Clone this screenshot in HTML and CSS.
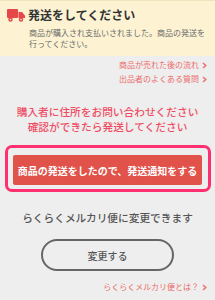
FILE: index.html
```html
<!DOCTYPE html>
<html lang="ja">
<head>
<meta charset="utf-8">
<link rel="stylesheet" href="styles.css">
</head>
<body>
<header class="notice">
  <div class="notice-title">
    <svg class="truck" width="18" height="14" viewBox="0 0 18 14">
      <rect x="0" y="1" width="11" height="9" rx="1" fill="#e8474a"/>
      <path d="M11.5 4 H15 L18 7.5 V10 H11.5 Z" fill="#e8474a"/>
      <circle cx="3.5" cy="11.5" r="2.2" fill="#e8474a"/>
      <circle cx="14" cy="11.5" r="2.2" fill="#e8474a"/>
      <circle cx="3.5" cy="11.5" r="0.8" fill="#fdf3d3"/>
      <circle cx="14" cy="11.5" r="0.8" fill="#fdf3d3"/>
    </svg>
    <h1>発送をしてください</h1>
  </div>
  <p class="notice-desc">商品が購入され支払いされました。商品の発送を行ってください。</p>
</header>
<main class="content">
  <nav class="links">
    <a class="link">商品が売れた後の流れ<svg class="chev" width="5" height="7" viewBox="0 0 5 7"><path d="M1 1 L3.8 3.5 L1 6" fill="none" stroke="#ec6b6b" stroke-width="1.4"/></svg></a>
    <a class="link">出品者のよくある質問<svg class="chev" width="5" height="7" viewBox="0 0 5 7"><path d="M1 1 L3.8 3.5 L1 6" fill="none" stroke="#ec6b6b" stroke-width="1.4"/></svg></a>
  </nav>
  <p class="alert">購入者に住所をお問い合わせください<br>確認ができたら発送してください</p>
  <div class="primary-wrap">
    <button class="primary">商品の発送をしたので、発送通知をする</button>
  </div>
  <p class="info">らくらくメルカリ便に変更できます</p>
  <button class="secondary">変更する</button>
  <nav class="links bottom">
    <a class="link">らくらくメルカリ便とは？<svg class="chev" width="5" height="7" viewBox="0 0 5 7"><path d="M1 1 L3.8 3.5 L1 6" fill="none" stroke="#ec6b6b" stroke-width="1.4"/></svg></a>
  </nav>
</main>
</body>
</html>
```
FILE: styles.css
```css
* { box-sizing: border-box; margin: 0; padding: 0; }
html, body { background: #eeeeee; }
body {
  width: 215px;
  height: 300px;
  overflow: hidden;
  font-family: "Noto Sans CJK JP", "Noto Sans", sans-serif;
}
.notice {
  background: #fdf3d3;
  border-top: 1px solid #efe4bd;
  padding: 5px 8px 7px 7px;
}
.notice-title {
  display: flex;
  align-items: center;
  gap: 3px;
  height: 18px;
}
.truck { flex: none; }
.notice-title h1 {
  font-size: 12px;
  line-height: 18px;
  font-weight: 700;
  color: #333;
}
.notice-desc {
  margin: 3px 0 0 22px;
  font-size: 8px;
  line-height: 11px;
  color: #6a6a6a;
}
.content {
  display: flex;
  flex-direction: column;
  align-items: center;
}
.links {
  align-self: stretch;
  display: flex;
  flex-direction: column;
  align-items: flex-end;
  padding: 2px 8px 0 0;
}
.link {
  font-size: 8px;
  line-height: 14px;
  color: #ec6b6b;
  display: flex;
  align-items: center;
}
.chev {
  flex: none;
  margin-left: 3px;
}
.alert {
  margin-top: 18px;
  font-size: 10.7px;
  line-height: 15px;
  font-weight: 500;
  color: #ee4d64;
  text-align: center;
}
.primary-wrap {
  align-self: stretch;
  margin: 11px 4px 0 5px;
  border: 3px solid #ff3070;
  border-radius: 7px;
  padding: 7px 6px 4px 5px;
}
.primary {
  display: block;
  width: 100%;
  height: 30px;
  border: none;
  border-radius: 2px;
  background: #e0524a;
  color: #fff;
  font-family: inherit;
  font-size: 10px;
  font-weight: 700;
  white-space: nowrap;
  padding: 0;
}
.info {
  margin-top: 18px;
  font-size: 10.7px;
  line-height: 16px;
  font-weight: 500;
  color: #555;
}
.secondary {
  margin-top: 13px;
  width: 133px;
  height: 32px;
  border: 2px solid #666;
  border-radius: 16px;
  background: transparent;
  color: #555;
  font-family: inherit;
  font-size: 10px;
  font-weight: 500;
}
.links.bottom { padding-top: 10px; }
.links.bottom .link { line-height: 12px; }
```
